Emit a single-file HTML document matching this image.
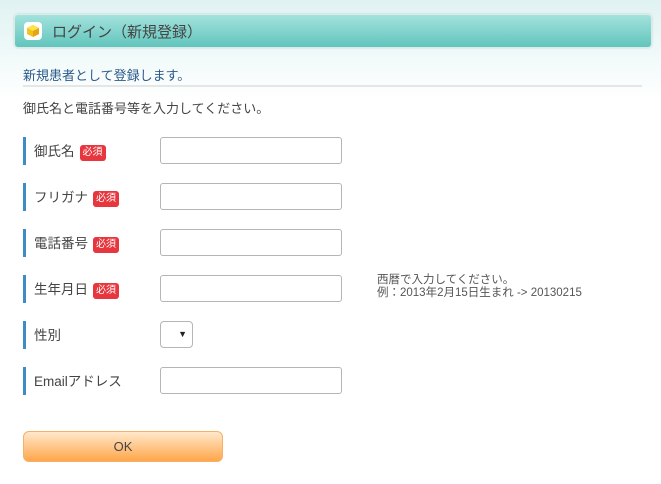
<!DOCTYPE html>
<html><head><meta charset="utf-8"><style>
*{margin:0;padding:0;box-sizing:border-box}
body{width:661px;height:484px;overflow:hidden;font-family:"Liberation Sans","Noto Sans CJK JP",sans-serif;color:#333;background:linear-gradient(#e0f2f2 0px,#f2fafa 60px,#fff 100px);position:relative}
.hdr{position:absolute;left:14px;top:14px;width:638px;height:34px;border-radius:4px;border:1px solid #d8ecea;background:linear-gradient(#a3e2dd,#62c5bd);box-shadow:0 0 2px rgba(0,0,0,.15)}
.icon{position:absolute;left:9px;top:7px;width:18px;height:18px;background:#fff;border-radius:4px}
.hdr .t{position:absolute;left:37px;top:6px;font-size:15px;color:#444}
.sub{position:absolute;left:23px;top:65px;font-size:13px;color:#2a5a8a}
.line{position:absolute;left:23px;top:85px;width:619px;height:2px;background:#e6e6e6}
.desc{position:absolute;left:23px;top:98px;font-size:13px;color:#444}
.row{position:absolute;left:23px;height:28px;border-left:3px solid #3d8cc4;width:330px}
.row .l{position:absolute;left:8px;top:3px;font-size:13.5px;color:#444;white-space:nowrap}
.req{display:inline-block;background:#e8363e;color:#fff;font-size:10px;border-radius:3px;padding:1px 3px;margin-left:5px;vertical-align:1px;line-height:14px}
.inp{position:absolute;left:134px;top:0px;width:182px;height:27px;border:1px solid #b5b5b5;border-radius:3px;background:#fff}
.sel{position:absolute;left:134px;top:0px;width:33px;height:27px;border:1px solid #b5b5b5;border-radius:4px;background:#fff;font-size:9px;text-align:right;padding:7px 5px 0 0;color:#222}
.note{position:absolute;left:377px;top:274px;font-size:11.5px;color:#555;line-height:13px}
.ok{position:absolute;left:23px;top:431px;width:200px;height:31px;border-radius:6px;border:1px solid #f5b06a;background:linear-gradient(#ffe8cc,#ffa64a);text-align:center;line-height:29px;font-size:13px;color:#444}
</style></head><body>
<div class="hdr"><div class="icon"><svg width="18" height="18" viewBox="0 0 18 18"><path d="M9 3L15 6V12L9 15L3 12V6Z" fill="#f3c21e"/><path d="M3 6L9 9L15 6L9 3Z" fill="#ffe14a"/><path d="M9 9V15L15 12V6Z" fill="#e3a712"/></svg></div><div class="t">ログイン（新規登録）</div></div>
<div class="sub">新規患者として登録します。</div>
<div class="line"></div>
<div class="desc">御氏名と電話番号等を入力してください。</div>
<div class="row" style="top:137px"><div class="l">御氏名<span class="req">必須</span></div><div class="inp"></div></div>
<div class="row" style="top:183px"><div class="l">フリガナ<span class="req">必須</span></div><div class="inp"></div></div>
<div class="row" style="top:229px"><div class="l">電話番号<span class="req">必須</span></div><div class="inp"></div></div>
<div class="row" style="top:275px"><div class="l">生年月日<span class="req">必須</span></div><div class="inp"></div></div>
<div class="row" style="top:321px"><div class="l">性別</div><div class="sel">▼</div></div>
<div class="row" style="top:367px"><div class="l">Emailアドレス</div><div class="inp"></div></div>
<div class="note">西暦で入力してください。<br>例：2013年2月15日生まれ -&gt; 20130215</div>
<div class="ok">OK</div>
</body></html>
